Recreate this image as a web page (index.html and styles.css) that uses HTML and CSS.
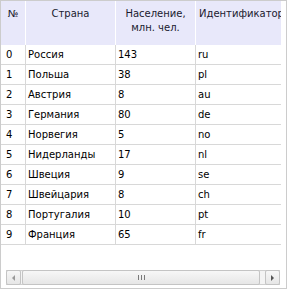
FILE: index.html
```html
<!DOCTYPE html>
<html lang="ru">
<head>
<meta charset="utf-8">
<link rel="stylesheet" href="styles.css">
</head>
<body>
<div class="grid">
  <div class="viewport">
    <div class="table">
      <div class="row head">
        <div class="cell c0">№</div>
        <div class="cell c1">Страна</div>
        <div class="cell c2">Население,<br>млн. чел.</div>
        <div class="cell c3">Идентификатор</div>
      </div>
      <div class="row"><div class="cell c0">0</div><div class="cell c1">Россия</div><div class="cell c2">143</div><div class="cell c3">ru</div></div>
      <div class="row"><div class="cell c0">1</div><div class="cell c1">Польша</div><div class="cell c2">38</div><div class="cell c3">pl</div></div>
      <div class="row"><div class="cell c0">2</div><div class="cell c1">Австрия</div><div class="cell c2">8</div><div class="cell c3">au</div></div>
      <div class="row"><div class="cell c0">3</div><div class="cell c1">Германия</div><div class="cell c2">80</div><div class="cell c3">de</div></div>
      <div class="row"><div class="cell c0">4</div><div class="cell c1">Норвегия</div><div class="cell c2">5</div><div class="cell c3">no</div></div>
      <div class="row"><div class="cell c0">5</div><div class="cell c1">Нидерланды</div><div class="cell c2">17</div><div class="cell c3">nl</div></div>
      <div class="row"><div class="cell c0">6</div><div class="cell c1">Швеция</div><div class="cell c2">9</div><div class="cell c3">se</div></div>
      <div class="row"><div class="cell c0">7</div><div class="cell c1">Швейцария</div><div class="cell c2">8</div><div class="cell c3">ch</div></div>
      <div class="row"><div class="cell c0">8</div><div class="cell c1">Португалия</div><div class="cell c2">10</div><div class="cell c3">pt</div></div>
      <div class="row"><div class="cell c0">9</div><div class="cell c1">Франция</div><div class="cell c2">65</div><div class="cell c3">fr</div></div>
    </div>
  </div>
  <div class="hscroll">
    <div class="sbtn"><span class="arrow left"></span></div>
    <div class="thumb"><span class="grip"></span><span class="grip"></span><span class="grip"></span></div>
    <div class="track-rest"></div>
    <div class="sbtn"><span class="arrow right"></span></div>
  </div>
</div>
</body>
</html>
```
FILE: styles.css
```css
html, body {
  margin: 0;
  padding: 0;
  background: #ffffff;
}
body {
  font-family: "DejaVu Sans", Verdana, sans-serif;
  font-size: 10px;
  color: #000;
}
.grid {
  width: 285px;
  height: 287px;
  border: 1px solid #cccccc;
  display: flex;
  flex-direction: column;
}
.viewport {
  width: 280px;
  height: 269px;
  overflow: hidden;
}
.table {
  width: 320px;
}
.row {
  display: grid;
  grid-template-columns: 25px 90px 80px 125px;
  height: 20px;
}
.row .cell {
  box-sizing: border-box;
  border-right: 1px solid #d8d8d8;
  border-bottom: 1px solid #d8d8d8;
  line-height: 19px;
  padding-left: 2px;
  white-space: nowrap;
}
.row .c0 { padding-left: 5px; }
.row.head {
  height: 44px;
  background: #e8e8fa;
}
.row.head .cell {
  border-right: 1px solid #ffffff;
  border-bottom: none;
  line-height: 14px;
  padding-top: 6px;
  text-align: center;
  color: #1a1a2e;
  padding-left: 0;
}
.row.head .c3 {
  text-align: left;
  padding-left: 3px;
}
.hscroll {
  margin-left: 5px;
  width: 274px;
  height: 13px;
  border-top: 1px solid #cfcfcf;
  border-bottom: 1px solid #cfcfcf;
  background: #f4f4f4;
  display: flex;
  gap: 1px;
}
.sbtn, .thumb {
  box-sizing: border-box;
  height: 15px;
  margin-top: -1px;
  border: 1px solid #c4c4c4;
  border-radius: 2px;
  background: linear-gradient(#f7f7f7, #e6e6e6);
  display: flex;
  align-items: center;
  justify-content: center;
}
.sbtn {
  width: 15px;
}
.thumb {
  width: 238px;
  gap: 2px;
}
.track-rest {
  flex: 1;
}
.grip {
  width: 1px;
  height: 5px;
  background: #7a7a7a;
}
.arrow {
  width: 0;
  height: 0;
  border-top: 3px solid transparent;
  border-bottom: 3px solid transparent;
}
.arrow.left {
  border-right: 3px solid #9a9a9a;
}
.arrow.right {
  border-left: 3px solid #555555;
}
```
